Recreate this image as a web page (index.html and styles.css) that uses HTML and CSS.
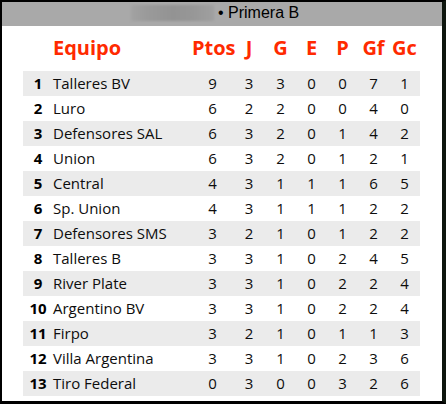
FILE: index.html
```html
<!DOCTYPE html>
<html lang="es">
<head>
<meta charset="utf-8">
<title>Primera B</title>
<link rel="stylesheet" href="styles.css">
</head>
<body>
<div class="frame">
  <div class="titlebar">
    <span class="blur"></span>
    <span class="title">• Primera B</span>
  </div>
  <div class="content">
    <div class="table">
      <div class="row head">
        <span></span><span class="name">Equipo</span><span>Ptos</span><span>J</span><span>G</span><span>E</span><span>P</span><span>Gf</span><span>Gc</span>
      </div>
      <div class="row odd"><span class="pos">1</span><span class="name">Talleres BV</span><span>9</span><span>3</span><span>3</span><span>0</span><span>0</span><span>7</span><span>1</span></div>
      <div class="row"><span class="pos">2</span><span class="name">Luro</span><span>6</span><span>2</span><span>2</span><span>0</span><span>0</span><span>4</span><span>0</span></div>
      <div class="row odd"><span class="pos">3</span><span class="name">Defensores SAL</span><span>6</span><span>3</span><span>2</span><span>0</span><span>1</span><span>4</span><span>2</span></div>
      <div class="row"><span class="pos">4</span><span class="name">Union</span><span>6</span><span>3</span><span>2</span><span>0</span><span>1</span><span>2</span><span>1</span></div>
      <div class="row odd"><span class="pos">5</span><span class="name">Central</span><span>4</span><span>3</span><span>1</span><span>1</span><span>1</span><span>6</span><span>5</span></div>
      <div class="row"><span class="pos">6</span><span class="name">Sp. Union</span><span>4</span><span>3</span><span>1</span><span>1</span><span>1</span><span>2</span><span>2</span></div>
      <div class="row odd"><span class="pos">7</span><span class="name">Defensores SMS</span><span>3</span><span>2</span><span>1</span><span>0</span><span>1</span><span>2</span><span>2</span></div>
      <div class="row"><span class="pos">8</span><span class="name">Talleres B</span><span>3</span><span>3</span><span>1</span><span>0</span><span>2</span><span>4</span><span>5</span></div>
      <div class="row odd"><span class="pos">9</span><span class="name">River Plate</span><span>3</span><span>3</span><span>1</span><span>0</span><span>2</span><span>2</span><span>4</span></div>
      <div class="row"><span class="pos">10</span><span class="name">Argentino BV</span><span>3</span><span>3</span><span>1</span><span>0</span><span>2</span><span>2</span><span>4</span></div>
      <div class="row odd"><span class="pos">11</span><span class="name">Firpo</span><span>3</span><span>2</span><span>1</span><span>0</span><span>1</span><span>1</span><span>3</span></div>
      <div class="row"><span class="pos">12</span><span class="name">Villa Argentina</span><span>3</span><span>3</span><span>1</span><span>0</span><span>2</span><span>3</span><span>6</span></div>
      <div class="row odd"><span class="pos">13</span><span class="name">Tiro Federal</span><span>0</span><span>3</span><span>0</span><span>0</span><span>3</span><span>2</span><span>6</span></div>
    </div>
  </div>
</div>
</body>
</html>
```

FILE: styles.css
```css
html, body {
  margin: 0;
  padding: 0;
  background: #000;
}
.frame {
  width: 440px;
  height: 399px;
  border-top: 2px solid #000;
  border-left: 2px solid #000;
  border-right: 4px solid #0e160e;
  border-bottom: 3px solid #000;
  background: #fff;
  display: flex;
  flex-direction: column;
}
.titlebar {
  height: 24px;
  background: #a9a9a9;
  display: flex;
  align-items: center;
  padding-left: 129px;
  overflow: hidden;
}
.blur {
  width: 83px;
  height: 16px;
  margin-top: -3px;
  background: linear-gradient(90deg, #a2a2a2 0%, #9a9a9a 20%, #939393 50%, #979797 75%, #a0a0a0 100%);
  filter: blur(1px);
}
.title {
  margin-left: 4px;
  font-family: "Liberation Sans", Arial, sans-serif;
  font-size: 16px;
  color: #000;
  margin-top: -3px;
}
.content {
  padding: 8px 0 0 21px;
}
.table {
  width: 397px;
  font-family: "Open Sans", sans-serif;
}
.row {
  display: grid;
  grid-template-columns: 30px 139px 41px 32px 31px 31px 31px 31px 31px;
  height: 25px;
  line-height: 25px;
  font-size: 15px;
  color: #0d0d0d;
  text-align: center;
}
.row.odd {
  background: #ebebeb;
}
.row .name {
  text-align: left;
}
.pos {
  font-weight: 700;
  color: #000;
}
.row.head {
  height: 27px;
  line-height: 27px;
  font-size: 20px;
  font-weight: 700;
  color: #ff2a00;
  margin-bottom: 10px;
}
```
